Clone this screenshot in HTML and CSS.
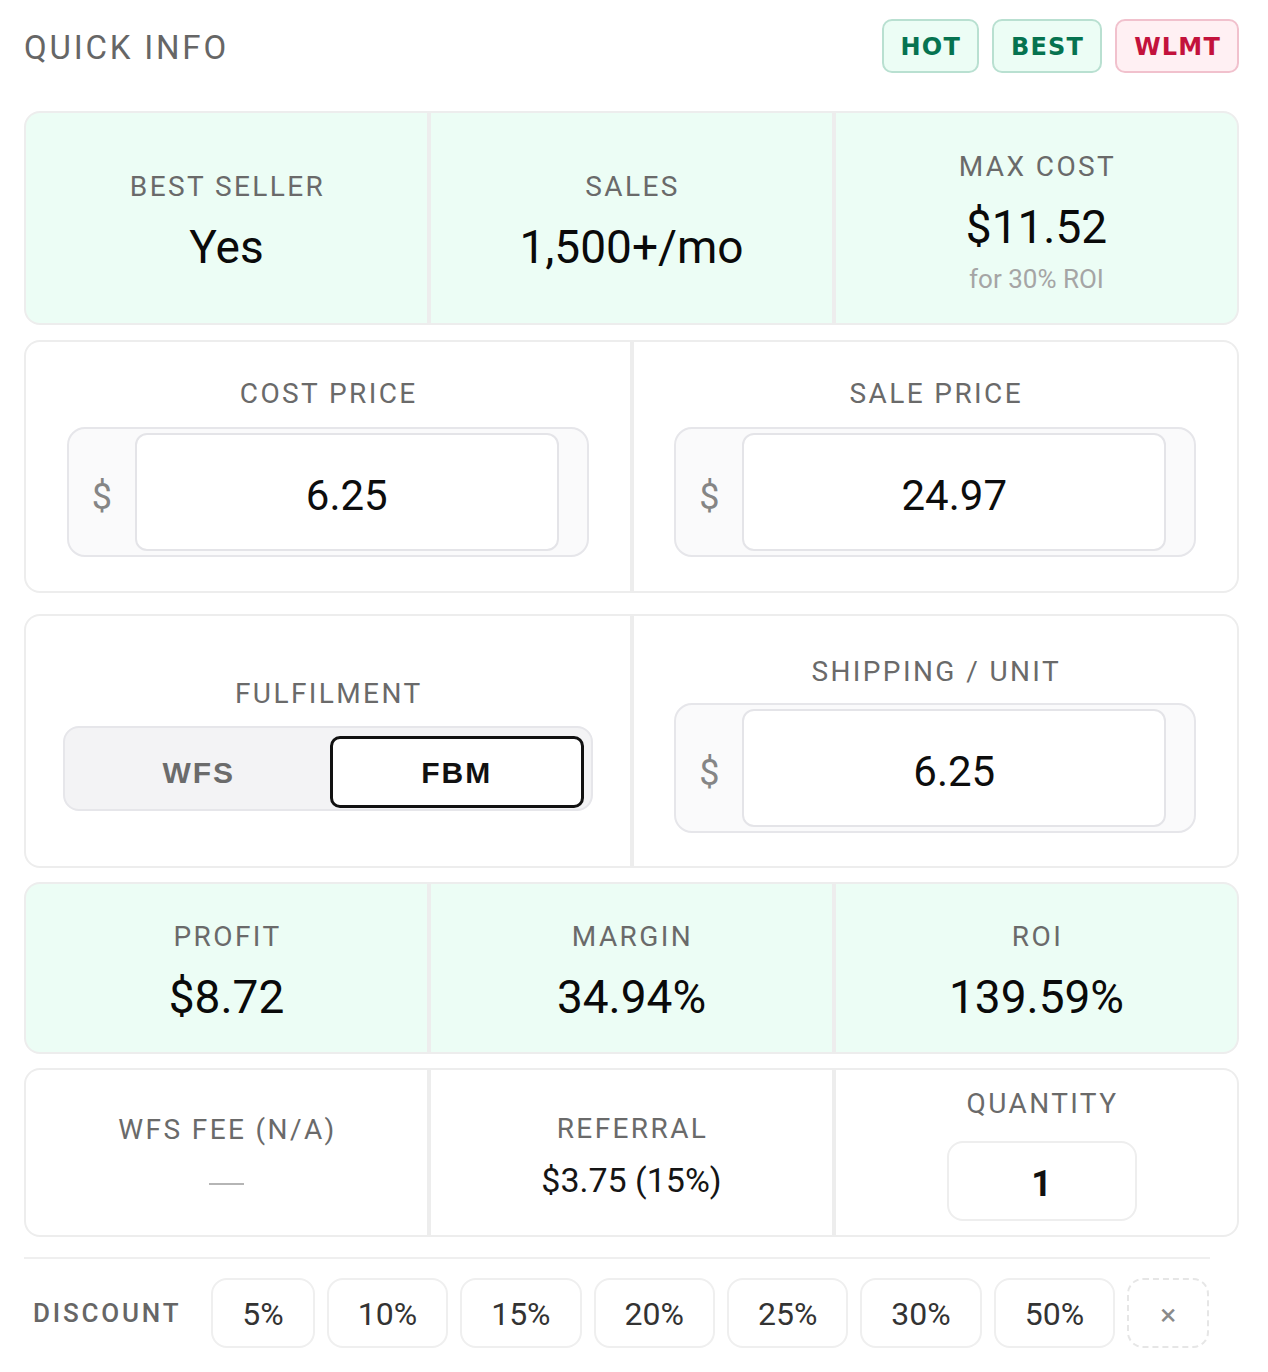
FILE: index.html
```html
<!DOCTYPE html>
<html lang="en">
<head>
<meta charset="utf-8">
<title>Quick Info</title>
<link rel="stylesheet" href="styles.css">
</head>
<body>
<div class="panel">
  <header class="head">
    <h2 class="title">QUICK INFO</h2>
    <div class="badges">
      <span class="badge badge-green">HOT</span>
      <span class="badge badge-green">BEST</span>
      <span class="badge badge-red">WLMT</span>
    </div>
  </header>

  <section class="card card-mint cols3 row-top">
    <div class="cell">
      <div class="label">BEST SELLER</div>
      <div class="value">Yes</div>
    </div>
    <div class="cell">
      <div class="label">SALES</div>
      <div class="value">1,500+/mo</div>
    </div>
    <div class="cell">
      <div class="label">MAX COST</div>
      <div class="value">$11.52</div>
      <div class="caption">for 30% ROI</div>
    </div>
  </section>

  <section class="card cols2 row-prices">
    <div class="cell">
      <div class="label">COST PRICE</div>
      <div class="money">
        <span class="money-prefix">$</span>
        <span class="money-input">6.25</span>
      </div>
    </div>
    <div class="cell">
      <div class="label">SALE PRICE</div>
      <div class="money">
        <span class="money-prefix">$</span>
        <span class="money-input">24.97</span>
      </div>
    </div>
  </section>

  <section class="card cols2 row-ship">
    <div class="cell">
      <div class="label">FULFILMENT</div>
      <div class="toggle">
        <span class="toggle-opt">WFS</span>
        <span class="toggle-opt toggle-on">FBM</span>
      </div>
    </div>
    <div class="cell">
      <div class="label">SHIPPING / UNIT</div>
      <div class="money money-ship">
        <span class="money-prefix">$</span>
        <span class="money-input">6.25</span>
      </div>
    </div>
  </section>

  <section class="card card-mint cols3 row-results">
    <div class="cell">
      <div class="label">PROFIT</div>
      <div class="value">$8.72</div>
    </div>
    <div class="cell">
      <div class="label">MARGIN</div>
      <div class="value">34.94%</div>
    </div>
    <div class="cell">
      <div class="label">ROI</div>
      <div class="value">139.59%</div>
    </div>
  </section>

  <section class="card cols3 row-fees">
    <div class="cell cell-wfs">
      <div class="label">WFS FEE (N/A)</div>
      <div class="dash"></div>
    </div>
    <div class="cell cell-ref">
      <div class="label">REFERRAL</div>
      <div class="value-sm">$3.75 (15%)</div>
    </div>
    <div class="cell cell-qty">
      <div class="label">QUANTITY</div>
      <div class="qty">1</div>
    </div>
  </section>

  <div class="discount">
    <span class="discount-label">DISCOUNT</span>
    <button class="chip">5%</button>
    <button class="chip">10%</button>
    <button class="chip">15%</button>
    <button class="chip">20%</button>
    <button class="chip">25%</button>
    <button class="chip">30%</button>
    <button class="chip">50%</button>
    <button class="chip chip-clear">&times;</button>
  </div>
</div>
</body>
</html>
```

FILE: styles.css
```css
* { box-sizing: border-box; }

body {
  margin: 0;
  background: #ffffff;
  font-family: Roboto, "Noto Sans", "Liberation Sans", sans-serif;
  color: #111111;
}

.panel {
  width: 1215px;
  margin-left: 24px;
  padding-top: 19px;
}

/* header */
.head {
  display: flex;
  align-items: center;
  justify-content: space-between;
  height: 54px;
  margin-bottom: 38px;
}

.title {
  margin: 0;
  padding-top: 2px;
  font-size: 33px;
  font-weight: 400;
  letter-spacing: 2.8px;
  color: #666666;
}

.badges {
  display: flex;
  gap: 13px;
}

.badge {
  display: flex;
  align-items: center;
  height: 54px;
  padding: 2px 16px 0 17px;
  border: 2px solid;
  border-radius: 10px;
  font-family: "DejaVu Sans", Verdana, sans-serif;
  font-weight: 700;
  font-size: 24px;
  letter-spacing: 1.2px;
}

.badge-green {
  background: #ecfdf5;
  border-color: #b9e0d1;
  color: #067350;
}

.badge-red {
  background: #fff0f3;
  border-color: #f1c1cd;
  color: #c3123c;
}

/* cards */
.card {
  display: grid;
  gap: 4px;
  background: #ededed;
  border: 2px solid #ededed;
  border-radius: 16px;
  overflow: hidden;
  margin-bottom: 14px;
}

.cols3 { grid-template-columns: repeat(3, 1fr); }
.cols2 { grid-template-columns: 1fr 1fr; }

.cell {
  display: flex;
  flex-direction: column;
  align-items: center;
  justify-content: center;
  background: #ffffff;
  text-align: center;
}

.card-mint .cell {
  background: #ecfdf5;
  padding-top: 8px;
}

.row-top { min-height: 214px; margin-bottom: 15px; }
.row-prices { min-height: 253px; margin-bottom: 21px; }
.row-ship { min-height: 254px; }
.row-ship .cell { padding-top: 5px; }
.row-results { min-height: 172px; }
.row-fees { min-height: 169px; margin-bottom: 20px; }

.label {
  font-size: 28px;
  line-height: 34px;
  letter-spacing: 2.4px;
  color: #6a6a6a;
  margin-left: 2px;
}

.value {
  margin-top: 16px;
  font-size: 46px;
  line-height: 55px;
  font-weight: 400;
  color: #0a0a0a;
}

.caption {
  margin-top: 9px;
  font-size: 26px;
  line-height: 31px;
  color: #a5a5a5;
}

.value-sm {
  margin-top: 14px;
  font-size: 34px;
  line-height: 41px;
  color: #151515;
}

.cell-wfs { padding-bottom: 8px; }
.cell-ref { padding-top: 8px; }

.dash {
  width: 35px;
  height: 2px;
  margin-top: 36px;
  background: #b5b5b5;
}

/* money input */
.money {
  display: flex;
  align-items: stretch;
  width: 522px;
  height: 130px;
  margin-top: 16px;
  padding: 4px 28px 4px 0;
  background: #fafafb;
  border: 2px solid #e6e6ea;
  border-radius: 18px;
}

.money-ship { margin-top: 14px; }

.money-prefix {
  width: 66px;
  display: flex;
  align-items: center;
  justify-content: center;
  padding-top: 10px;
  font-size: 36px;
  color: #858585;
}

.money-input {
  flex: 1;
  display: flex;
  align-items: center;
  justify-content: center;
  padding-top: 8px;
  background: #ffffff;
  border: 2px solid #e4e4e8;
  border-radius: 12px;
  font-size: 42px;
  color: #0d0d0d;
}

/* toggle */
.toggle {
  display: flex;
  gap: 4px;
  width: 530px;
  margin-top: 15px;
  padding: 8px 7px 1px 7px;
  background: #f3f3f5;
  border: 2px solid #e6e6ea;
  border-radius: 16px;
}

.toggle-opt {
  flex: 1;
  height: 72px;
  display: flex;
  align-items: center;
  justify-content: center;
  padding-top: 2px;
  font-family: "Liberation Sans", Arial, sans-serif;
  font-weight: 700;
  font-size: 30px;
  letter-spacing: 2px;
  color: #6b6b6b;
  border: 3px solid transparent;
  border-radius: 10px;
}

.toggle-on {
  background: #ffffff;
  border-color: #111111;
  color: #111111;
}

/* quantity */
.cell-qty { padding: 2px 0 0 10px; }

.qty {
  width: 190px;
  height: 80px;
  margin-top: 20px;
  display: flex;
  align-items: center;
  justify-content: center;
  padding-top: 6px;
  background: #ffffff;
  border: 2px solid #eeeeee;
  border-radius: 16px;
  font-size: 36px;
  font-weight: 700;
  color: #111111;
}

/* discount */
.discount {
  width: 1186px;
  display: flex;
  align-items: center;
  gap: 12px;
  padding: 19px 0 0 9px;
  border-top: 2px solid #efefef;
}

.discount-label {
  font-size: 26px;
  font-weight: 500;
  letter-spacing: 2.8px;
  color: #666666;
  margin-right: 18px;
}

.chip {
  height: 70px;
  padding: 2px 29px 0;
  background: #ffffff;
  border: 2px solid #efefef;
  border-radius: 16px;
  font-family: Roboto, "Noto Sans", sans-serif;
  font-size: 32px;
  color: #333333;
  cursor: pointer;
}

.chip-clear {
  width: 82px;
  padding: 2px 0 0;
  border-style: dashed;
  border-color: #e6e6e6;
  font-size: 30px;
  color: #8a8a8a;
}
```
